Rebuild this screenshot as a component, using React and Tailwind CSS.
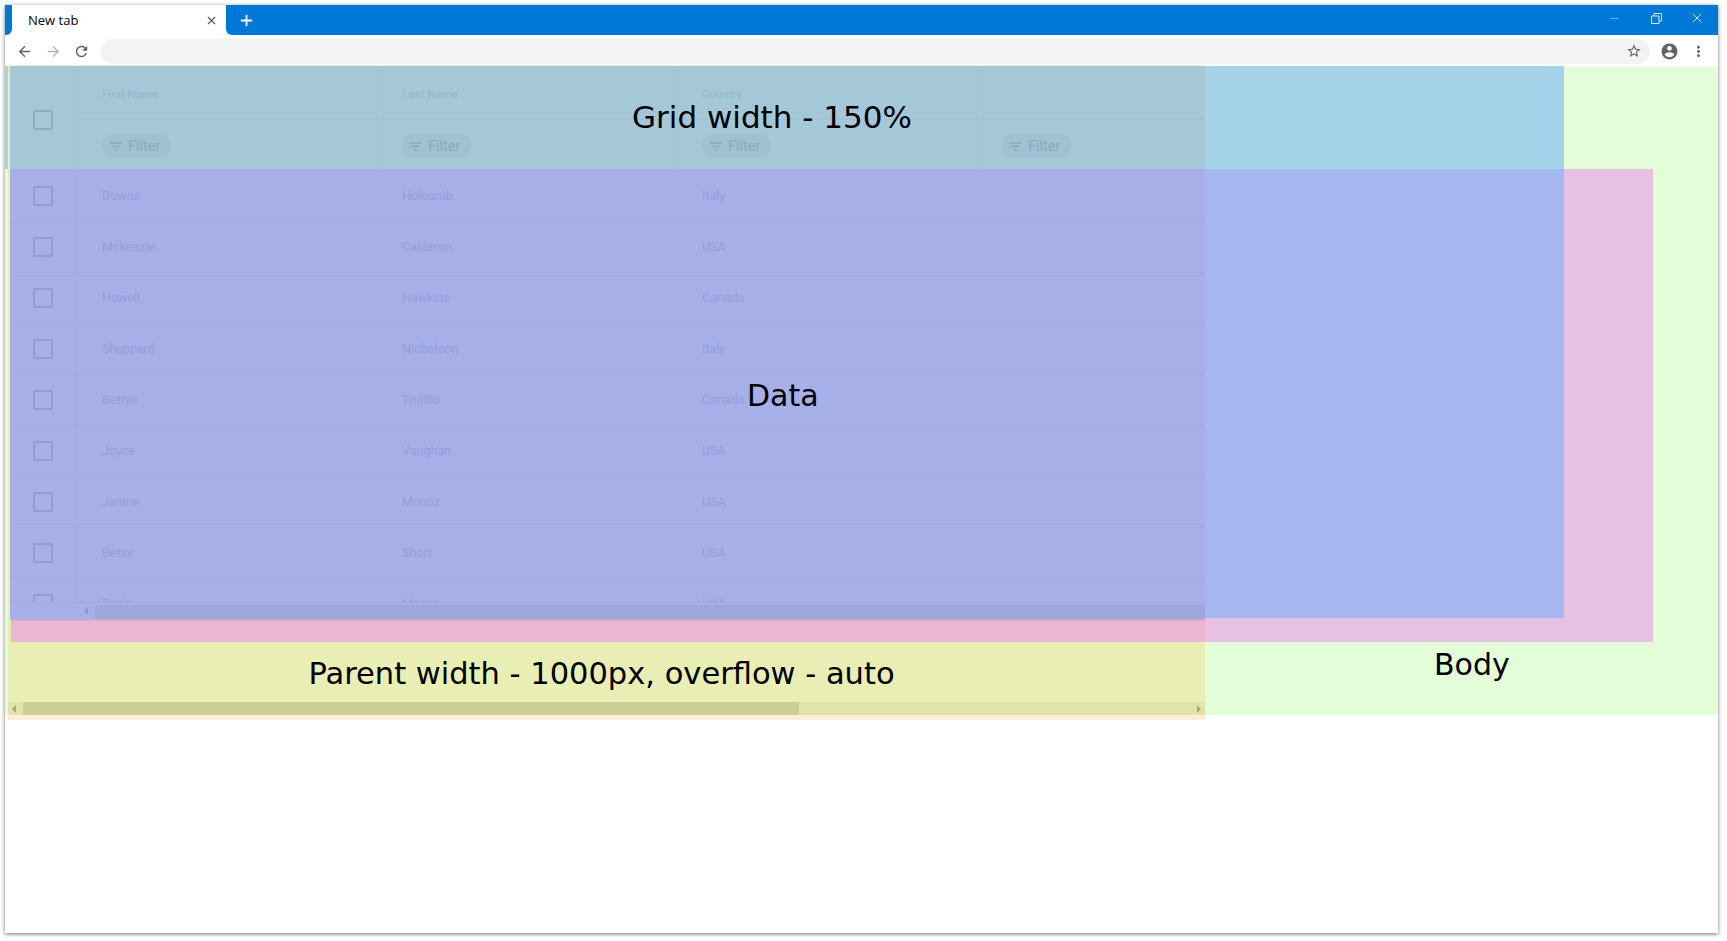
import React from 'react';
import { Minus, Plus, X } from 'lucide-react';

const rows = [
  ['Downs', 'Holcomb', 'Italy'],
  ['Mckenzie', 'Calderon', 'USA'],
  ['Howell', 'Hawkins', 'Canada'],
  ['Sheppard', 'Nicholson', 'Italy'],
  ['Bettye', 'Trujillo', 'Canada'],
  ['Joyce', 'Vaughan', 'USA'],
  ['Janine', 'Munoz', 'USA'],
  ['Betsy', 'Short', 'USA'],
  ['Doris', 'Mason', 'USA'],
];

const MaterialIcon = ({ d, size = 18, className = '' }) => (
  <svg width={size} height={size} viewBox="0 0 24 24" fill="currentColor" className={className}>
    <path d={d} />
  </svg>
);

const ICONS = {
  back: 'M20 11H7.83l5.59-5.59L12 4l-8 8 8 8 1.41-1.41L7.83 13H20v-2z',
  forward: 'M4 11h12.17l-5.59-5.59L12 4l8 8-8 8-1.41-1.41L16.17 13H4v-2z',
  reload: 'M17.65 6.35C16.2 4.9 14.21 4 12 4c-4.42 0-7.99 3.58-7.99 8s3.57 8 7.99 8c3.73 0 6.84-2.55 7.73-6h-2.08c-.82 2.33-3.04 4-5.65 4-3.31 0-6-2.69-6-6s2.69-6 6-6c1.66 0 3.14.69 4.22 1.78L13 11h7V4l-2.35 2.35z',
  star: 'M22 9.24l-7.19-.62L12 2 9.19 8.63 2 9.24l5.46 4.73L5.82 21 12 17.27 18.18 21l-1.63-7.03L22 9.24zM12 15.4l-3.76 2.27 1-4.28-3.32-2.88 4.38-.38L12 6.1l1.71 4.04 4.38.38-3.32 2.88 1 4.28L12 15.4z',
  account: 'M12 2C6.48 2 2 6.48 2 12s4.48 10 10 10 10-4.48 10-10S17.52 2 12 2zm0 3c1.66 0 3 1.34 3 3s-1.34 3-3 3-3-1.34-3-3 1.34-3 3-3zm0 14.2c-2.5 0-4.71-1.28-6-3.22.03-1.99 4-3.08 6-3.08 1.99 0 5.97 1.09 6 3.08-1.29 1.94-3.5 3.22-6 3.22z',
  more: 'M12 8c1.1 0 2-.9 2-2s-.9-2-2-2-2 .9-2 2 .9 2 2 2zm0 2c-1.1 0-2 .9-2 2s.9 2 2 2 2-.9 2-2-.9-2-2-2zm0 6c-1.1 0-2 .9-2 2s.9 2 2 2 2-.9 2-2-.9-2-2-2z',
  filter: 'M10 18h4v-2h-4v2zM3 6v2h18V6H3zm3 7h12v-2H6v2z',
};

const FilterPill = () => (
  <div className="flex h-6 w-[69px] items-center gap-1 rounded-full bg-[#9fc2d2] pl-[5px] text-[14.5px] text-[#88acbd]">
    <MaterialIcon d={ICONS.filter} size={17} />
    <span className="pt-[2px]">Filter</span>
  </div>
);

const Browser = () => (
  <>
    <div className="flex h-[30px] shrink-0 bg-white">
      <div className="w-[7px] rounded-br-[6px] bg-[#0078d7]" />
      <div className="flex w-[214px] items-center rounded-t-[8px] bg-white pl-4 pr-2 pt-[2px] text-[13px] text-black">
        <span className="flex-1 font-['Open_Sans',sans-serif]">New tab</span>
        <X size={13} strokeWidth={2} className="mb-[2px] text-[#555]" />
      </div>
      <div className="flex flex-1 items-center rounded-bl-[6px] bg-[#0078d7] text-white">
        <Plus size={17} strokeWidth={2.5} className="ml-3" />
        <div className="flex-1" />
        <Minus size={13} strokeWidth={1.5} className="mb-1 mr-[30px] text-[#8cc4ef]" />
        <svg width="11" height="11" viewBox="0 0 11 11" fill="none" stroke="#d5e9f9" className="mb-1 mr-[27px]">
          <path d="M0.5 3h7.5v7.5h-7.5zM3 3v-2.5h7.5v7.5h-2.5" />
        </svg>
        <X size={16} strokeWidth={1.5} className="mb-1 mr-[13px] text-[#d5e9f9]" />
      </div>
    </div>
    <div className="flex h-[32px] shrink-0 items-center bg-white pr-[11px] text-[#5f6368]">
      <MaterialIcon d={ICONS.back} size={17} className="ml-[11px]" />
      <MaterialIcon d={ICONS.forward} size={17} className="ml-3 text-[#b4b6b8]" />
      <MaterialIcon d={ICONS.reload} size={17} className="ml-[11px]" />
      <div className="ml-[11px] flex h-[25px] flex-1 items-center justify-end rounded-full bg-[#f1f3f4] pr-[8px]">
        <MaterialIcon d={ICONS.star} size={16} />
      </div>
      <MaterialIcon d={ICONS.account} size={19} className="ml-[10px]" />
      <MaterialIcon d={ICONS.more} size={17} className="ml-[11px]" />
    </div>
  </>
);

const GridPanel = () => (
  <div className="relative flex h-[553px] flex-col overflow-hidden">
    <div className="flex h-[103px] shrink-0 bg-[#a5c8d8] font-['Roboto',sans-serif]">
      <div className="flex w-[68px] shrink-0 items-center justify-center border-r border-[#9fc1d2] pr-px pt-1">
        <div className="h-5 w-5 rounded-[2px] border-2 border-[#8fadc2]" />
      </div>
      {['First Name', 'Last Name', 'Country', ''].map((title) => (
        <div key={title} className="flex w-[300px] shrink-0 flex-col border-r border-[#9fc1d2]">
          <div className="flex h-[54px] items-center border-b border-[#9fc1d2] pl-[24px] pt-1 text-[11.5px] text-[#92b7c9]">{title}</div>
          <div className="flex flex-1 items-center pl-[24px] pt-[3px]">
            <FilterPill />
          </div>
        </div>
      ))}
    </div>
    <div className="h-[433px] shrink-0 overflow-hidden bg-[#a6afe7] pt-[2px] font-['Roboto',sans-serif] text-[12.5px] text-[#959edb]">
      {rows.map((row) => (
        <div key={row[0]} className="flex h-[51px] items-center border-b border-[#a0a9e0]">
          <div className="flex h-full w-[68px] shrink-0 items-center justify-center border-r border-[#a0a9e0] pr-px">
            <div className="h-5 w-5 rounded-[2px] border-2 border-[#929bd3]" />
          </div>
          {row.map((cell) => (
            <div key={cell} className="w-[300px] shrink-0 pl-[24px]">{cell}</div>
          ))}
        </div>
      ))}
    </div>
    <div className="flex h-[17px] shrink-0 border-t border-[#9fa8df] bg-[#a6afe7]">
      <div className="w-[68px] shrink-0" />
      <div className="flex w-[17px] shrink-0 items-center pl-[6px]">
        <div className="h-0 w-0 border-y-4 border-r-4 border-y-transparent border-r-[#8d96c9]" />
      </div>
      <div className="mt-[2px] flex-1 bg-[#9da7de]" />
    </div>
    <div className="absolute left-[622px] top-[31px] font-['DejaVu_Sans',sans-serif] text-[31px] leading-[40px] text-black">Grid width - 150%</div>
    <div className="absolute left-[737px] top-[310px] font-['DejaVu_Sans',sans-serif] text-[30px] leading-[40px] text-black">Data</div>
  </div>
);

// parent block sits over the page colours, like the devtools style overlay in the picture
const ParentPanel = () => (
  <div className="absolute left-[3px] top-[-2px] flex h-[655px] w-[1197px] flex-col border-t border-[#fdecd8] bg-[#e9eeb5]">
    <div className="pl-[2px]">
      <GridPanel />
    </div>
    <div className="h-[23px] shrink-0 pl-[3px]">
      <div className="h-full border-t-2 border-[#dcaac8] bg-[#eab7d2]" />
    </div>
    <div className="flex flex-1 items-center justify-center pr-[10px] pt-1 font-['DejaVu_Sans',sans-serif] text-[30.5px] text-black">
      Parent width - 1000px, overflow - auto
    </div>
    <div className="flex h-[13px] shrink-0 bg-[#e0e4a9]">
      <div className="flex w-[15px] items-center pl-[4px]">
        <div className="h-0 w-0 border-y-4 border-r-4 border-y-transparent border-r-[#a5aa78]" />
      </div>
      <div className="w-[776px] bg-[#c9cf95]" />
      <div className="flex flex-1 items-center justify-end pr-[4px]">
        <div className="h-0 w-0 border-y-4 border-l-4 border-y-transparent border-l-[#a5aa78]" />
      </div>
    </div>
    <div className="h-[5px] shrink-0 bg-[#fdecd8]" />
  </div>
);

const App = () => (
  <div className="h-screen w-full overflow-hidden bg-white pl-[5px] pt-[5px]">
    <div className="flex h-[928px] w-[1713px] flex-col bg-white shadow-[0_1px_4px_rgba(0,0,0,0.55)]">
      <Browser />
      <div className="relative h-[648px] shrink-0 bg-[#e4fdd9]">
        <div className="-mt-px h-[103px] w-[1559px] bg-[#a5d4ea]" />
        <div className="ml-[6px] h-[473px] w-[1642px] bg-[#e6c1e4]">
          <div className="h-[449px] w-[1553px] bg-[#a6b6f0]" />
        </div>
        <div className="flex h-[73px] items-start pl-[1429px] font-['DejaVu_Sans',sans-serif] text-[30px] text-black">
          Body
        </div>
        <ParentPanel />
      </div>
    </div>
  </div>
);

export default App;
